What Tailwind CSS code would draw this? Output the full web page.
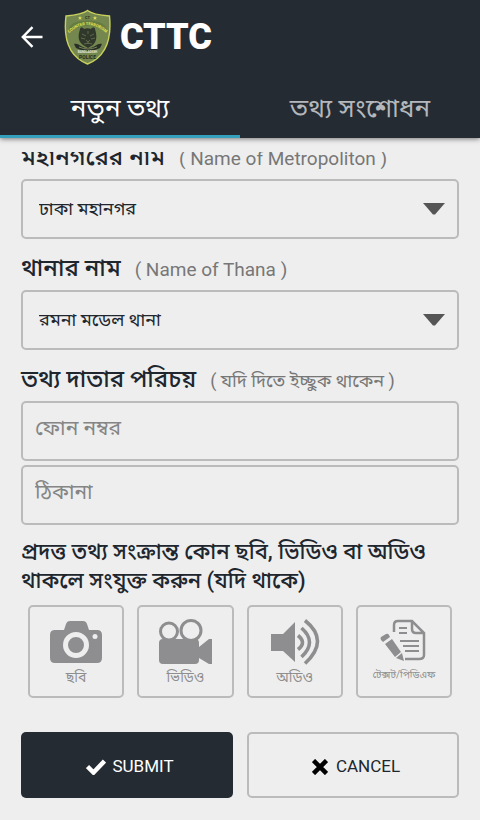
<!DOCTYPE html>
<html lang="bn">

<head>
  <meta charset="UTF-8" />
  <meta name="viewport" content="width=device-width, initial-scale=1.0" />
  <title>CTTC</title>
  <script src="https://cdn.jsdelivr.net/npm/@tailwindcss/browser@4"></script>
</head>

<body class="bg-[#eeeeee] h-screen flex flex-col overflow-hidden font-[Roboto,'Noto_Sans_Bengali',sans-serif] text-[#20262e]">
  <header class="bg-[#252b33] shadow-[0_1px_5px_rgba(0,0,0,0.5)] shrink-0">
    <div class="flex items-center h-[74px] pl-5">
      <a href="#" aria-label="Back" class="text-white mr-5">
        <svg class="w-6 h-6" viewBox="0 0 24 24" fill="none" stroke="currentColor" stroke-width="2.4">
          <path d="M22.500 12H3M12.500 2.200 2.800 12l9.700 9.800" />
        </svg>
      </a>
      <svg class="w-12 h-14 mr-2" viewBox="0 0 48 56" aria-hidden="true">
        <path d="M23.500 1.500C19 5 8 6.500 2 7c-3 25 4 41 21.500 48C41 48 48 32 45.500 7 39 6.500 28 5 23.500 1.500Z" fill="#74874f" stroke="#c9d15c" stroke-width="1.400" />
        <path id="arc" d="M5 24Q23.500 8 42 24" fill="none" />
        <path d="M4 23Q5 15 12 13 24 10 35 13 42 15 43.500 23 34 17 24 17 14 17 4 23Z" fill="#657c43" />
        <text x="23.500" y="9.500" text-anchor="middle" font-size="4" font-weight="700" fill="#2b331f">CT</text>
        <path d="m16 7 .6 1.300 1.400.1-1 .9.300 1.400L16 10l-1.300.7.300-1.400-1-.9 1.400-.1ZM31 7l.6 1.300 1.400.1-1 .9.300 1.400L31 10l-1.300.7.300-1.400-1-.9 1.400-.1Z" fill="#e0dc55" />
        <text font-size="4" font-weight="700" fill="#e9e34d" text-anchor="middle"><textPath href="#arc" startOffset="50%">COUNTER TERRORISM</textPath></text>
        <path d="M16 20c0-2 3-2 4 0 2-1 5-1 7 0 1-2 4-2 4 0l1 4c1 5 0 9-3 12l-5 3-5-3c-4-3-5-7-4-12Z" fill="#30372b" />
        <path d="m18 25 4 2M30 25l-4 2M24 22v3M22 31l2 2 2-2M24 33v2M17 29l4 1M31 29l-4 1M20 35l4-1 4 1" fill="none" stroke="#6b774f" stroke-width=".8" />
        <path d="M10 35c3-1 5 1 7 2 5 3 9 3 14 0 2-1 4-3 7-2l-2 4c-8 4-16 4-24 0Z" fill="#282f26" />
        <path d="M15 38q9 4 18 0" fill="none" stroke="#8b9867" stroke-width=".8" />
        <text x="23.500" y="44" text-anchor="middle" font-size="3" font-weight="700" fill="#e6e9df">BANGLADESH</text>
        <text x="23.500" y="49.500" text-anchor="middle" font-size="5" font-weight="700" fill="#252d1e">POLICE</text>
      </svg>
      <h1 class="text-white text-4xl font-black leading-none">CTTC</h1>
    </div>
    <nav class="grid grid-cols-2 h-16 text-[26px] text-center leading-none">
      <a href="#new" class="flex items-center justify-center pt-1.5 text-white border-b-3 border-[#35a0bd]">নতুন তথ্য</a>
      <a href="#edit" class="flex items-center justify-center pt-1.5 text-[#b4b7bb] border-b-3 border-transparent">তথ্য সংশোধন</a>
    </nav>
  </header>

  <main class="mt-3.5 px-[21px] overflow-hidden grow">
    <form>
      <!-- first row is scrolled half under the header -->
      <div class="flex items-baseline gap-3.5 h-[39px] -mt-3">
        <label for="metropolis" class="text-2xl leading-[34px] font-medium whitespace-nowrap">মহানগরের নাম</label>
        <span class="text-[19px] text-[#777777] whitespace-nowrap">( Name of Metropoliton )</span>
      </div>
      <div class="relative">
        <select id="metropolis" class="appearance-none w-full h-15 border-2 border-[#bbbbbb] rounded-[5px] px-4 text-lg text-[#20262e]">
          <option>ঢাকা মহানগর</option>
        </select>
        <svg class="absolute right-3.5 top-6 w-[22px] h-3 pointer-events-none" viewBox="0 0 22 12" fill="#555555">
          <path d="M0 0h22L12 11.500h-2Z" />
        </svg>
      </div>

      <div class="flex items-baseline gap-3.5 h-[51px] pt-2">
        <label for="thana" class="text-2xl leading-[42px] font-medium whitespace-nowrap">থানার নাম</label>
        <span class="text-[19px] text-[#777777]">( Name of Thana )</span>
      </div>
      <div class="relative">
        <select id="thana" class="appearance-none w-full h-15 border-2 border-[#bbbbbb] rounded-[5px] px-4 text-lg text-[#20262e]">
          <option>রমনা মডেল থানা</option>
        </select>
        <svg class="absolute right-3.5 top-6 w-[22px] h-3 pointer-events-none" viewBox="0 0 22 12" fill="#555555">
          <path d="M0 0h22L12 11.500h-2Z" />
        </svg>
      </div>

      <div class="flex items-baseline gap-3.5 h-[51px] pt-2">
        <label for="phone" class="text-2xl leading-[42px] font-medium whitespace-nowrap">তথ্য দাতার পরিচয়</label>
        <span class="text-lg text-[#777777] whitespace-nowrap">( যদি দিতে ইচ্ছুক থাকেন )</span>
      </div>
      <input id="phone" type="tel" placeholder="ফোন নম্বর"
        class="block w-full h-15 border-2 border-[#bbbbbb] rounded-[5px] px-3 pb-1.5 text-[21px] placeholder:text-[#858585]" />
      <input id="address" type="text" placeholder="ঠিকানা" aria-label="ঠিকানা"
        class="block w-full h-15 mt-1 border-2 border-[#bbbbbb] rounded-[5px] px-3 pb-1.5 text-[21px] placeholder:text-[#858585]" />

      <p class="mt-3 text-[22px] leading-[29px] font-medium">প্রদত্ত তথ্য সংক্রান্ত কোন ছবি, ভিডিও বা অডিও থাকলে সংযুক্ত করুন (যদি থাকে)</p>

      <div class="grid grid-cols-4 gap-[13px] px-[7px] mt-2.5">
        <button type="button" class="flex flex-col items-center h-[93px] pt-3 border-2 border-[#bbbbbb] rounded-[5px] text-[#8e8e90]">
          <svg class="w-14 h-12" viewBox="0 0 56 48">
            <path d="M7 11h9l2-6q1-3 4-3h13q3 0 4 3l2 6h8q5 0 5 5v23q0 5-5 5H7q-5 0-5-5V16q0-5 5-5Z" fill="currentColor" />
            <circle cx="28" cy="26" r="10.500" fill="none" stroke="#eeeeee" stroke-width="5" />
            <circle cx="47" cy="17.500" r="2.500" fill="#eeeeee" />
          </svg>
          <span class="text-sm leading-5">ছবি</span>
        </button>
        <button type="button" class="flex flex-col items-center h-[93px] pt-3 border-2 border-[#bbbbbb] rounded-[5px] text-[#8e8e90]">
          <svg class="w-14 h-12" viewBox="0 0 56 48" fill="currentColor">
            <circle cx="12" cy="12.500" r="8.500" fill="none" stroke="currentColor" stroke-width="3" />
            <circle cx="34" cy="11.500" r="10" fill="none" stroke="currentColor" stroke-width="3" />
            <path d="M6 20h32q4 0 4 4v4l10-8h3v25h-3l-10-6v2q0 4-4 4H6q-4 0-4-4V24q0-4 4-4Z" />
          </svg>
          <span class="text-sm leading-5">ভিডিও</span>
        </button>
        <button type="button" class="flex flex-col items-center h-[93px] pt-3 border-2 border-[#bbbbbb] rounded-[5px] text-[#8e8e90]">
          <svg class="w-14 h-12" viewBox="0 0 56 48">
            <path d="M4 15h12L28 3v40L16 32H4Z" fill="currentColor" />
            <path d="M31 16.500q9 7 0 14M34.500 9q16 14 0 29M38 1.500q25 20 0 43" fill="none" stroke="currentColor" stroke-width="3.600" />
          </svg>
          <span class="text-sm leading-5">অডিও</span>
        </button>
        <button type="button" class="flex flex-col items-center h-[93px] pt-3 border-2 border-[#bbbbbb] rounded-[5px] text-[#8e8e90]">
          <svg class="w-14 h-12" viewBox="0 0 56 48" fill="none" stroke="currentColor" stroke-width="2.500">
            <path d="M18 13V6q0-4 4-4h14l12 12v22q0 4-5 4H29M36 2v8q0 4 4 4h8" />
            <path d="M23 9h8M23 14h8M24 22h19M27 27h16M29 32h14" stroke-width="2" />
            <path d="m5 18 5-3q2-1 3 1l1 2-7 5-2-2q-1-2 0-3ZM9 25l7-5 9 13-6 5ZM20 39l6-5 2 8Z" fill="currentColor" stroke="none" />
          </svg>
          <span class="text-[10px] leading-4 whitespace-nowrap">টেক্সট/পিডিএফ</span>
        </button>
      </div>

      <div class="grid grid-cols-2 gap-3.5 mt-[34px]">
        <button type="submit" class="flex items-center justify-center gap-1.5 h-[66px] pt-1 pl-1.5 rounded-[5px] bg-[#252b33] text-white text-[17px]">
          <svg class="w-5 h-4" viewBox="0 0 20 16" fill="none" stroke="currentColor" stroke-width="4.500">
            <path d="m1.500 7.500 6 6L18.500 2" />
          </svg>
          SUBMIT
        </button>
        <button type="reset" class="flex items-center justify-center gap-2 h-[66px] pt-1 pl-1.5 rounded-[5px] border-2 border-[#bbbbbb] text-[#20262e] text-[17px]">
          <svg class="w-4 h-4" viewBox="0 0 16 16" fill="none" stroke="#000000" stroke-width="4.500">
            <path d="m1.500 1.500 13 13M14.500 1.500l-13 13" />
          </svg>
          CANCEL
        </button>
      </div>
    </form>
  </main>
</body>

</html>
